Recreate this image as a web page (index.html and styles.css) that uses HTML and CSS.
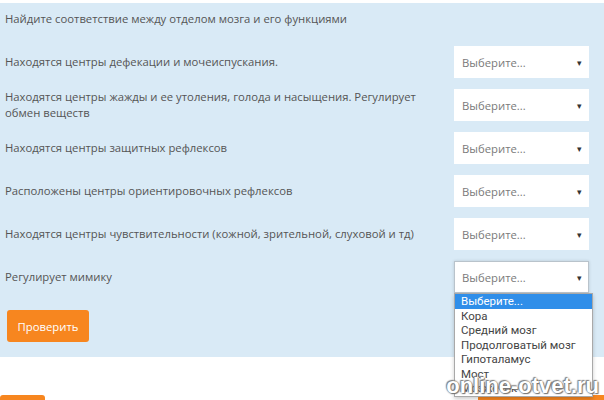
FILE: index.html
```html
<!DOCTYPE html>
<html lang="ru">
<head>
    <meta charset="UTF-8">
    <title>Соответствие</title>
    <link rel="stylesheet" href="styles.css">
</head>
<body>
    <div class="page">
        <div class="panel">
            <p class="title">Найдите соответствие между отделом мозга и его функциями</p>

            <div class="rows">
                <div class="row">
                    <span class="label">Находятся центры дефекации и мочеиспускания.</span>
                    <div class="select"><span>Выберите...</span><span class="arrow">&#9662;</span></div>
                </div>
                <div class="row">
                    <span class="label">Находятся центры жажды и ее утоления, голода и насыщения. Регулирует обмен веществ</span>
                    <div class="select"><span>Выберите...</span><span class="arrow">&#9662;</span></div>
                </div>
                <div class="row">
                    <span class="label">Находятся центры защитных рефлексов</span>
                    <div class="select"><span>Выберите...</span><span class="arrow">&#9662;</span></div>
                </div>
                <div class="row">
                    <span class="label">Расположены центры ориентировочных рефлексов</span>
                    <div class="select"><span>Выберите...</span><span class="arrow">&#9662;</span></div>
                </div>
                <div class="row">
                    <span class="label">Находятся центры чувствительности (кожной, зрительной, слуховой и тд)</span>
                    <div class="select"><span>Выберите...</span><span class="arrow">&#9662;</span></div>
                </div>
                <div class="row">
                    <span class="label">Регулирует мимику</span>
                    <div class="select open">
                        <span>Выберите...</span><span class="arrow">&#9662;</span>
                        <!-- open list of the last select -->
                        <ul class="options">
                            <li class="active">Выберите...</li>
                            <li>Кора</li>
                            <li>Средний мозг</li>
                            <li>Продолговатый мозг</li>
                            <li>Гипоталамус</li>
                            <li>Мост</li>
                            <li>Мозжечок</li>
                        </ul>
                    </div>
                </div>
            </div>

            <button class="btn check">Проверить</button>
        </div>

        <div class="footer">
            <button class="btn left"></button>
            <button class="btn right"></button>
        </div>

        <div class="watermark">online-otvet.ru</div>
    </div>
</body>
</html>
```

FILE: styles.css
```css
body {
    margin: 0;
    padding: 0;
    background-color: #fff;
    font-family: "Open Sans", "Liberation Sans", sans-serif;
    font-size: 11.3px;
    color: #555;
}

.page {
    position: relative;
    width: 604px;
    height: 400px;
    overflow: hidden;
}

.panel {
    margin-top: 3px;
    background-color: #d9eaf6;
    padding: 8px 15px 15px 5px;
}

.title {
    margin: 0 0 19px 0;
    line-height: 16px;
}

.rows {
    display: flex;
    flex-direction: column;
    gap: 11px;
}

.row {
    display: flex;
    align-items: center;
    justify-content: space-between;
    min-height: 32px;
}

.label {
    width: 430px;
    line-height: 16px;
}

.select {
    position: relative;
    width: 135px;
    height: 32px;
    box-sizing: border-box;
    background-color: #fff;
    display: flex;
    align-items: center;
    justify-content: space-between;
    padding: 0 7px 0 8px;
    color: #7a7a7a;
}

.select.open {
    border: 1px solid #b9c3cb;
    padding: 0 6px 0 7px;
    box-shadow: 0 0 3px rgba(0, 0, 0, 0.15);
}

.arrow {
    font-size: 9px;
    color: #333;
}

.options {
    position: absolute;
    top: 31px;
    left: -1px;
    width: 137px;
    margin: 0;
    padding: 0;
    list-style: none;
    background-color: #fff;
    border: 1px solid #a9a9a9;
    box-shadow: 0 2px 4px rgba(0, 0, 0, 0.2);
    font-family: Roboto, "Liberation Sans", sans-serif;
    font-size: 11.5px;
    color: #444;
    z-index: 2;
}

.options li {
    height: 14.5px;
    line-height: 14px;
    padding-left: 6px;
}

.options li.active {
    background-color: #2f8ee9;
    color: #fff;
}

.btn {
    border: none;
    border-radius: 3px;
    background-color: #f7861f;
    color: #fff;
    font-family: "Open Sans", "Liberation Sans", sans-serif;
    font-size: 11.3px;
    cursor: pointer;
}

.check {
    display: block;
    margin: 17px 0 0 2px;
    width: 82px;
    height: 32px;
}

.footer {
    display: flex;
    justify-content: space-between;
    margin-top: 38px;
}

.footer .left {
    width: 45px;
    height: 32px;
}

.footer .right {
    width: 130px;
    height: 32px;
    margin-right: -4px;
}

.watermark {
    position: absolute;
    right: 5px;
    bottom: 1px;
    z-index: 3;
    font-family: "Liberation Sans Narrow", "Liberation Sans", sans-serif;
    font-weight: bold;
    font-size: 22px;
    color: #fff;
    text-shadow: 0 0 2px #666, 1px 1px 1px #777, -1px -1px 1px #888;
}
```
